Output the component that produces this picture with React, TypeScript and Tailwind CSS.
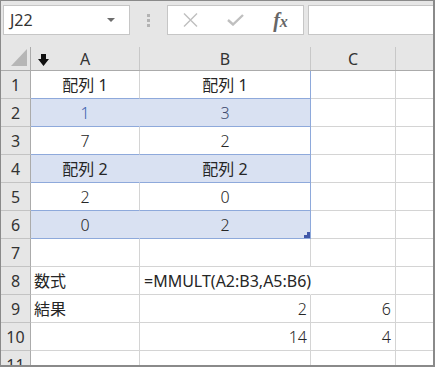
import React from 'react'

type Align = 'left' | 'center' | 'right'
type Cell = { text?: string; align?: Align; color?: string; light?: boolean }
type Row = { n: number; band?: boolean; table?: boolean; overflow?: boolean; a?: Cell; b?: Cell; c?: Cell }

const font = { fontFamily: '"Noto Sans", "Noto Sans CJK JP", sans-serif' }

const rows: Row[] = [
  { n: 1, table: true, a: { text: '配列 1', align: 'center' }, b: { text: '配列 1', align: 'center' } },
  { n: 2, table: true, band: true, a: { text: '1', align: 'center', color: '#3b5fae', light: true }, b: { text: '3', align: 'center', color: '#3c4a6e', light: true } },
  { n: 3, table: true, a: { text: '7', align: 'center', light: true }, b: { text: '2', align: 'center', light: true } },
  { n: 4, table: true, band: true, a: { text: '配列 2', align: 'center' }, b: { text: '配列 2', align: 'center' } },
  { n: 5, table: true, a: { text: '2', align: 'center', light: true }, b: { text: '0', align: 'center', light: true } },
  { n: 6, table: true, band: true, a: { text: '0', align: 'center', light: true }, b: { text: '2', align: 'center', light: true } },
  { n: 7 },
  { n: 8, overflow: true, a: { text: '数式' }, b: { text: '=MMULT(A2:B3,A5:B6)' } },
  { n: 9, a: { text: '結果' }, b: { text: '2', align: 'right', light: true }, c: { text: '6', align: 'right', light: true } },
  { n: 10, b: { text: '14', align: 'right', light: true }, c: { text: '4', align: 'right', light: true } },
  { n: 11 },
]

const alignCls: Record<Align, string> = {
  left: 'justify-start',
  center: 'justify-center',
  right: 'justify-end',
}

function Text({ cell }: { cell?: Cell }) {
  if (!cell?.text) return null
  return (
    <span className={`whitespace-nowrap ${cell.light ? 'font-light' : ''}`} style={{ color: cell.color ?? '#262626' }}>
      {cell.text}
    </span>
  )
}

function SheetRow({ row }: { row: Row }) {
  const bandBg = row.band ? 'bg-[#d9e1f2]' : 'bg-white'
  const innerLine = row.band ? 'border-[#d9e1f2]' : 'border-[#d4d4d4]'
  const tableBottom = row.table ? 'border-b-[#8ea9db]' : 'border-b-[#d4d4d4]'
  return (
    <div className="flex h-[28px] shrink-0 text-[16px]">
      <div className="w-[30px] shrink-0 flex items-center justify-center bg-[#e6e6e6] border-r border-b border-r-[#ababab] border-b-[#c3c3c3] text-[#333]">
        {row.n}
      </div>
      <div
        className={`w-[109px] shrink-0 flex items-center px-[3px] border-r border-b ${bandBg} ${innerLine} ${tableBottom} ${alignCls[row.a?.align ?? 'left']}`}
      >
        <Text cell={row.a} />
      </div>
      <div
        className={`relative w-[171px] shrink-0 flex items-center px-[3px] border-r border-b ${bandBg} ${tableBottom} ${
          row.table ? 'border-r-[#8ea9db]' : row.overflow ? 'border-r-white' : 'border-r-[#d4d4d4]'
        } ${alignCls[row.b?.align ?? 'left']} ${row.overflow ? 'pl-[4px] z-10' : ''}`}
      >
        <Text cell={row.b} />
        {row.n === 6 && (
          <svg className="absolute right-0 bottom-0" width="6" height="6" viewBox="0 0 6 6">
            <polygon points="3,0 6,0 6,6 0,6 0,3 3,3" fill="#4158a9" />
          </svg>
        )}
      </div>
      <div
        className={`w-[85px] shrink-0 flex items-center px-[4px] border-r border-b border-[#d4d4d4] bg-white ${alignCls[row.c?.align ?? 'left']}`}
      >
        <Text cell={row.c} />
      </div>
      <div className="flex-1 border-b border-[#d4d4d4] bg-white" />
    </div>
  )
}

export default function App() {
  return (
    <div
      className="w-[435px] h-[367px] overflow-hidden flex flex-col bg-[#e6e6e6] border-l border-t border-r-2 border-b-2 border-[#8a8a8a]"
      style={font}
    >
      {/* formula bar */}
      <div className="h-[46px] shrink-0 flex items-start pt-[4px]">
        <div className="ml-[2px] w-[127px] h-[30px] bg-white border border-[#c6c6c6] flex items-center pl-[6px] pr-[14px] text-[16px] text-[#333]">
          <span className="flex-1">J22</span>
          <svg width="8" height="4" viewBox="0 0 8 4">
            <polygon points="0,0 8,0 4,4" fill="#6d6d6d" />
          </svg>
        </div>
        <div className="w-[37px] h-[30px] flex flex-col items-center justify-center gap-[2px]">
          <span className="w-[3px] h-[3px] bg-[#b3b3b3]" />
          <span className="w-[3px] h-[3px] bg-[#b3b3b3]" />
          <span className="w-[3px] h-[3px] bg-[#b3b3b3]" />
        </div>
        <div className="w-[137px] h-[30px] bg-white border border-[#c6c6c6] flex items-center">
          <div className="w-[45px] flex justify-center">
            <svg width="15" height="14" viewBox="0 0 15 14">
              <path d="M1 0.5 L14 13.5 M14 0.5 L1 13.5" stroke="#bfbfbf" strokeWidth="1.4" fill="none" />
            </svg>
          </div>
          <div className="w-[45px] flex justify-center">
            <svg width="17" height="12" viewBox="0 0 17 12">
              <path d="M1 6 L6 10.5 L16 1" stroke="#bfbfbf" strokeWidth="2.4" fill="none" />
            </svg>
          </div>
          <div className="w-[45px] flex justify-center">
            <span
              className="italic font-bold text-[20px] leading-none text-[#666]"
              style={{ fontFamily: '"Liberation Serif", "DejaVu Serif", serif' }}
            >
              f<span className="text-[16px]">x</span>
            </span>
          </div>
        </div>
        <div className="ml-[4px] flex-1 h-[30px] bg-white border-l border-t border-b border-[#c6c6c6]" />
      </div>

      {/* column headers */}
      <div className="flex h-[24px] shrink-0 text-[16px] text-[#333] border-b border-[#ababab]">
        <div className="relative w-[30px] shrink-0 border-r border-[#ababab]">
          <svg className="absolute left-[10px] top-[2px]" width="16" height="17" viewBox="0 0 16 17">
            <polygon points="16,0 16,17 0,17" fill="#b6b6b6" />
          </svg>
        </div>
        <div className="relative w-[109px] shrink-0 flex items-center justify-center border-r border-[#c8c8c8]">
          <svg className="absolute left-[7px] top-[7px]" width="11" height="12" viewBox="0 0 11 12">
            <polygon points="3,0 8,0 8,5 11,5 5.5,12 0,5 3,5" fill="#111" />
          </svg>
          A
        </div>
        <div className="w-[171px] shrink-0 flex items-center justify-center border-r border-[#c8c8c8]">B</div>
        <div className="w-[85px] shrink-0 flex items-center justify-center border-r border-[#c8c8c8]">C</div>
        <div className="flex-1" />
      </div>

      {rows.map((r) => (
        <SheetRow key={r.n} row={r} />
      ))}
    </div>
  )
}
